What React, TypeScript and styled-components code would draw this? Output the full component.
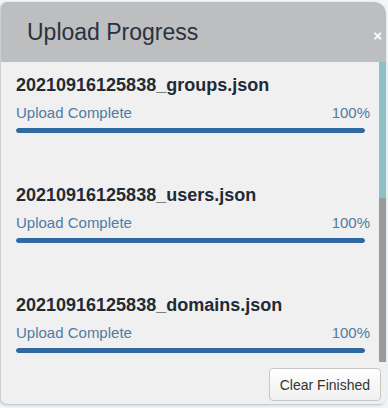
import styled, { createGlobalStyle } from "styled-components";

const GlobalStyle = createGlobalStyle`
  html, body {
    margin: 0;
    padding: 0;
    background: #f3f6f8;
    font-family: "Liberation Sans", Arial, sans-serif;
  }
`;

type Upload = { name: string; status: string; percent: number };

const uploads: Upload[] = [
  { name: "20210916125838_groups.json", status: "Upload Complete", percent: 100 },
  { name: "20210916125838_users.json", status: "Upload Complete", percent: 100 },
  { name: "20210916125838_domains.json", status: "Upload Complete", percent: 100 },
];

const App = () => {
  return (
    <>
      <GlobalStyle />
      <Page>
        <Modal>
          <Header>
            <Title>Upload Progress</Title>
            <Close>×</Close>
          </Header>
          <Body>
            <List>
              {uploads.map((u) => (
                <Item key={u.name}>
                  <FileName>{u.name}</FileName>
                  <StatusRow>
                    <span>{u.status}</span>
                    <span>{u.percent}%</span>
                  </StatusRow>
                  <Track>
                    <Fill style={{ width: `${u.percent}%` }} />
                  </Track>
                </Item>
              ))}
            </List>
            <ScrollTrack>
              <ScrollThumb />
            </ScrollTrack>
          </Body>
          <Footer>
            <ClearButton>Clear Finished</ClearButton>
          </Footer>
        </Modal>
      </Page>
    </>
  );
};

export default App;

/* ===== styled-components ===== */

const Page = styled.div`
  width: 388px;
  height: 408px;
  padding: 2px 2px 4px 1px;
  box-sizing: border-box;
  overflow: hidden;
`;

const Modal = styled.div`
  display: flex;
  flex-direction: column;
  height: 100%;
  background: #f0f0f0;
  border-radius: 6px 12px 6px 6px;
  box-shadow: -1px 1px 3px rgba(0, 0, 0, 0.25);
  overflow: hidden;
`;

const Header = styled.div`
  display: flex;
  align-items: center;
  justify-content: space-between;
  height: 60px;
  padding: 0 4px 0 26px;
  background: #bdbec0;
  flex-shrink: 0;
`;

const Title = styled.h1`
  margin: 0;
  font-size: 23px;
  font-weight: 400;
  color: #29313e;
`;

const Close = styled.span`
  color: #ffffff;
  font-size: 15px;
  font-weight: 700;
  margin-top: 6px;
`;

const Body = styled.div`
  display: flex;
  flex-direction: row;
  height: 303px;
  flex-shrink: 0;
`;

const List = styled.div`
  flex: 1;
  padding: 12px 9px 0 15px;
  overflow: hidden;
`;

const Item = styled.div`
  height: 110px;
`;

const FileName = styled.div`
  font-size: 18px;
  font-weight: 700;
  line-height: 22px;
  color: #222a35;
`;

const StatusRow = styled.div`
  display: flex;
  justify-content: space-between;
  margin-top: 7px;
  font-size: 15px;
  line-height: 20px;
  color: #4f7ba4;
`;

const Track = styled.div`
  height: 5px;
  margin: 5px 5px 0 0;
  border-radius: 3px;
  background: #d9dde2;
  overflow: hidden;
`;

const Fill = styled.div`
  height: 100%;
  border-radius: 3px;
  background: #2e6aa1;
`;

const ScrollTrack = styled.div`
  display: flex;
  flex-direction: column;
  justify-content: flex-end;
  width: 7px;
  margin-bottom: 3px;
  background: #8fc1c4;
`;

const ScrollThumb = styled.div`
  height: 164px;
  background: #9a9b9d;
`;

const Footer = styled.div`
  flex: 1;
  display: flex;
  justify-content: flex-end;
  align-items: flex-start;
  padding: 3px 5px 0 0;
`;

const ClearButton = styled.button`
  height: 33px;
  padding: 0 10px;
  font-family: "Liberation Sans", Arial, sans-serif;
  font-size: 14px;
  color: #333;
  background: linear-gradient(#ffffff, #f0f0f0);
  border: 1px solid #c8c8c8;
  border-radius: 4px;
  cursor: pointer;
`;
